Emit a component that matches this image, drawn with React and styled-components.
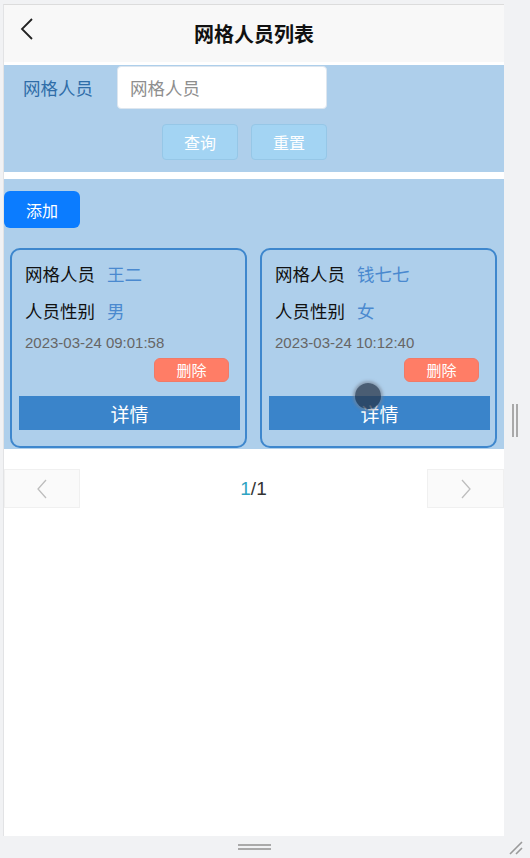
import React from 'react';
import styled, { createGlobalStyle } from 'styled-components';

const GlobalStyle = createGlobalStyle`
  html, body {
    margin: 0;
    padding: 0;
    background: #f1f2f4;
  }
  * { box-sizing: border-box; }
`;

const Frame = styled.div`
  display: grid;
  grid-template-columns: 4px 500px 26px;
  grid-template-rows: 4px 832px 22px;
  width: 530px;
  height: 858px;
  background: #f1f2f4;
  font-family: "Noto Sans CJK SC", "Liberation Sans", sans-serif;
`;

const Screen = styled.div`
  grid-column: 2;
  grid-row: 2;
  position: relative;
  background: #ffffff;
  border-left: 1px solid #e2e3e5;
  border-top: 1px solid #dcdcdc;
  margin-left: -1px;
  display: flex;
  flex-direction: column;
  overflow: hidden;
`;

const SideStrip = styled.div`
  grid-column: 3;
  grid-row: 2;
  display: flex;
  align-items: center;
  justify-content: center;
  padding-right: 4px;
`;

const BottomStrip = styled.div`
  grid-column: 1 / 4;
  grid-row: 3;
  position: relative;
  display: flex;
  align-items: center;
  justify-content: center;
  padding-right: 22px;
`;

const VHandle = styled.div`
  width: 6px;
  height: 33px;
  border-left: 2px solid #a9a9a9;
  border-right: 2px solid #a9a9a9;
`;

const HHandle = styled.div`
  width: 33px;
  height: 6px;
  border-top: 2px solid #a9a9a9;
  border-bottom: 2px solid #a9a9a9;
`;

const Corner = styled.svg`
  position: absolute;
  right: 6px;
  bottom: 2px;
`;

const Header = styled.div`
  height: 57px;
  background: #f8f8f8;
  display: flex;
  align-items: center;
  justify-content: center;
  position: relative;
  flex-shrink: 0;
`;

const BackBtn = styled.svg`
  position: absolute;
  left: 15px;
  top: 11px;
`;

const Title = styled.h1`
  margin: 0;
  font-size: 20px;
  font-weight: 700;
  color: #111;
`;

const SearchPanel = styled.div`
  margin-top: 3px;
  background: #aecfeb;
  height: 107px;
  padding-top: 1px;
  display: flex;
  flex-direction: column;
  flex-shrink: 0;
`;

const FieldRow = styled.div`
  display: flex;
  align-items: center;
  padding-left: 19px;
  gap: 24px;
`;

const FieldLabel = styled.span`
  font-size: 17.5px;
  color: #2f6da8;
`;

const Input = styled.input`
  width: 210px;
  height: 43px;
  border: 1px solid #dde6ef;
  border-radius: 4px;
  background: #fff;
  padding: 0 12px;
  font-size: 17.5px;
  font-family: inherit;
  color: #333;
  outline: none;
  &::placeholder { color: #8e8e8e; }
`;

const ActionRow = styled.div`
  display: flex;
  gap: 13px;
  margin-top: 15px;
  padding-left: 158px;
`;

const SoftButton = styled.button`
  width: 76px;
  height: 36px;
  background: #a3d4f3;
  border: 1px solid #96c7e7;
  border-radius: 4px;
  color: #fff;
  font-size: 16px;
  font-family: inherit;
  padding: 0;
`;

const ListPanel = styled.div`
  margin-top: 7px;
  background: #aecfeb;
  height: 270px;
  padding-top: 12px;
  flex-shrink: 0;
`;

const AddButton = styled.button`
  width: 76px;
  height: 37px;
  background: #0b7cff;
  border: none;
  border-radius: 6px;
  color: #fff;
  font-size: 16px;
  font-family: inherit;
  padding: 0;
  display: block;
`;

const CardGrid = styled.div`
  display: grid;
  grid-template-columns: 237px 237px;
  gap: 13px;
  margin-top: 20px;
  padding-left: 6px;
`;

const Card = styled.div`
  height: 200px;
  border: 2px solid #3e87cd;
  border-radius: 10px;
  padding: 12px 6px 0 13px;
  display: flex;
  flex-direction: column;
`;

const InfoRow = styled.div`
  display: flex;
  gap: 12px;
  font-size: 17.5px;
  line-height: 24px;
  height: 24px;
  margin-bottom: 13px;
`;

const InfoKey = styled.span`
  color: #111;
`;

const InfoValue = styled.span`
  color: #4a89cf;
`;

const DateText = styled.div`
  font-family: "Liberation Sans", Arial, sans-serif;
  font-size: 15px;
  color: #666;
  line-height: 18px;
  margin-top: -2px;
`;

const DeleteButton = styled.button`
  align-self: flex-end;
  margin-right: 10px;
  margin-top: 6px;
  width: 75px;
  height: 24px;
  background: #ff7d66;
  border: 1px solid #f07a67;
  border-radius: 6px;
  color: #fff;
  font-size: 15px;
  font-family: inherit;
  padding: 0;
  line-height: 20px;
`;

const DetailBar = styled.button`
  margin-top: 14px;
  margin-left: -6px;
  width: 221px;
  height: 34px;
  background: #3a84ca;
  border: none;
  color: #fff;
  font-size: 19px;
  font-family: inherit;
  padding: 0;
`;

const Pager = styled.div`
  margin-top: 20px;
  height: 39px;
  display: flex;
  align-items: center;
  justify-content: space-between;
  flex-shrink: 0;
`;

const PageBtn = styled.div`
  width: ${p => p.$w}px;
  height: 39px;
  background: #fafafa;
  border: 1px solid #f0f0f0;
  display: flex;
  align-items: center;
  justify-content: center;
`;

const PageText = styled.span`
  font-family: "Liberation Sans", Arial, sans-serif;
  font-size: 19px;
  color: #333;
`;

const Current = styled.span`
  color: #2fa3c2;
`;

const TouchDot = styled.div`
  position: absolute;
  left: 351px;
  top: 378px;
  width: 26px;
  height: 26px;
  border-radius: 50%;
  background: rgba(40, 55, 75, 0.75);
  box-shadow: 0 0 3px 2px rgba(120, 130, 145, 0.6);
`;

const people = [
  { name: '王二', sex: '男', time: '2023-03-24 09:01:58' },
  { name: '钱七七', sex: '女', time: '2023-03-24 10:12:40' },
];

function Chevron({ dir }) {
  const d = dir === 'left' ? 'M12 2 L4 11 L12 20' : 'M5 2 L13 11 L5 20';
  return (
    <svg width="17" height="22" viewBox="0 0 17 22">
      <path d={d} fill="none" stroke="#bdbdbd" strokeWidth="1.3" />
    </svg>
  );
}

export default function App() {
  return (
    <>
      <GlobalStyle />
      <Frame>
        <Screen>
          <Header>
            <BackBtn width="16" height="26" viewBox="0 0 16 26">
              <path d="M13 3 L3 13 L13 23" fill="none" stroke="#222" strokeWidth="1.8" />
            </BackBtn>
            <Title>网格人员列表</Title>
          </Header>

          <SearchPanel>
            <FieldRow>
              <FieldLabel>网格人员</FieldLabel>
              <Input placeholder="网格人员" />
            </FieldRow>
            <ActionRow>
              <SoftButton>查询</SoftButton>
              <SoftButton>重置</SoftButton>
            </ActionRow>
          </SearchPanel>

          <ListPanel>
            <AddButton>添加</AddButton>
            <CardGrid>
              {people.map(p => (
                <Card key={p.name}>
                  <InfoRow>
                    <InfoKey>网格人员</InfoKey>
                    <InfoValue>{p.name}</InfoValue>
                  </InfoRow>
                  <InfoRow>
                    <InfoKey>人员性别</InfoKey>
                    <InfoValue>{p.sex}</InfoValue>
                  </InfoRow>
                  <DateText>{p.time}</DateText>
                  <DeleteButton>删除</DeleteButton>
                  <DetailBar>详情</DetailBar>
                </Card>
              ))}
            </CardGrid>
          </ListPanel>

          <Pager>
            <PageBtn $w={76}><Chevron dir="left" /></PageBtn>
            <PageText><Current>1</Current>/1</PageText>
            <PageBtn $w={77}><Chevron dir="right" /></PageBtn>
          </Pager>

          <TouchDot />
        </Screen>

        <SideStrip>
          <VHandle />
        </SideStrip>

        <BottomStrip>
          <HHandle />
          <Corner width="16" height="16" viewBox="0 0 16 16">
            <path d="M2 14 L14 2 M8 14 L14 8" stroke="#9a9a9a" strokeWidth="1.6" />
          </Corner>
        </BottomStrip>
      </Frame>
    </>
  );
}
